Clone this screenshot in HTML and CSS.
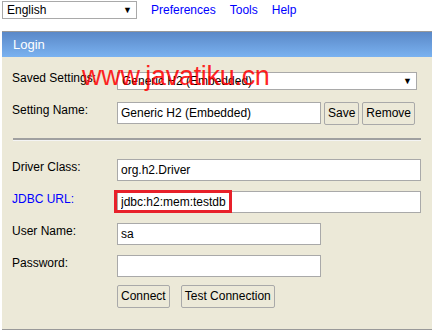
FILE: index.html
```html
<!DOCTYPE html>
<html>
<head>
    <meta charset="UTF-8">
    <title>H2 Console</title>
    <link rel="stylesheet" href="styles.css">
</head>
<body>
<div class="toolbar">
    <div class="lang-select">
        <span>English</span>
        <span class="arrow">&#9660;</span>
    </div>
    <a href="#" class="nav-link">Preferences</a>
    <a href="#" class="nav-link">Tools</a>
    <a href="#" class="nav-link">Help</a>
</div>

<div class="login">
    <div class="login-header">Login</div>
    <div class="login-body">
        <div class="row">
            <label class="label">Saved Settings:</label>
            <div class="select wide">
                <span>Generic H2 (Embedded)</span>
                <span class="arrow">&#9660;</span>
            </div>
        </div>
        <div class="row">
            <label class="label">Setting Name:</label>
            <input type="text" class="field short" value="Generic H2 (Embedded)">
            <button class="btn">Save</button>
            <button class="btn">Remove</button>
        </div>

        <hr class="sep">

        <div class="row">
            <label class="label">Driver Class:</label>
            <input type="text" class="field long" value="org.h2.Driver">
        </div>
        <div class="row">
            <label class="label link-label">JDBC URL:</label>
            <div class="mark-wrap">
                <input type="text" class="field long" value="jdbc:h2:mem:testdb">
                <div class="mark"></div>
            </div>
        </div>
        <div class="row">
            <label class="label">User Name:</label>
            <input type="text" class="field short" value="sa">
        </div>
        <div class="row">
            <label class="label">Password:</label>
            <input type="password" class="field short" value="">
        </div>
        <div class="row actions">
            <button class="btn">Connect</button>
            <button class="btn">Test Connection</button>
        </div>
    </div>
    <div class="watermark">www.javatiku.cn</div>
</div>
</body>
</html>
```

FILE: styles.css
```css
body {
    margin: 1px 2px;
    font-family: "Liberation Sans", Arial, sans-serif;
    font-size: 12px;
    color: #000000;
    background-color: #FFFFFF;
}

.toolbar {
    display: flex;
    align-items: center;
    height: 18px;
}

.lang-select {
    display: flex;
    justify-content: space-between;
    align-items: center;
    box-sizing: border-box;
    width: 135px;
    height: 18px;
    padding: 0 4px 0 4px;
    border: 1px solid #A9A9A9;
    font-size: 12px;
}

.arrow {
    font-size: 9px;
}

.nav-link {
    margin-left: 14px;
    font-size: 12px;
    color: #0000FF;
    text-decoration: none;
}

.login {
    position: relative;
    width: 430px;
    margin: 12px 0 0 -1px;
    border: 1px solid #999999;
    background-color: #ECE9D8;
}

.login-header {
    height: 25px;
    line-height: 25px;
    padding-left: 11px;
    font-size: 13px;
    color: #FFFFFF;
    background: linear-gradient(#5A88C8, #7AB2F0);
}

.login-body {
    padding: 13px 11px 22px 10px;
}

.row {
    display: flex;
    align-items: center;
    height: 22px;
    margin-bottom: 10px;
}

.label {
    width: 105px;
    align-self: flex-start;
    padding-top: 1px;
}

.link-label {
    color: #0000FF;
}

.select {
    display: flex;
    justify-content: space-between;
    align-items: center;
    box-sizing: border-box;
    height: 18px;
    padding: 0 4px 0 4px;
    border: 1px solid #A9A9A9;
    background-color: #FFFFFF;
    font-size: 12px;
}

.wide {
    width: 300px;
}

.field {
    box-sizing: border-box;
    height: 22px;
    margin: 0;
    padding: 1px 3px;
    border: 1px solid #A9A9A9;
    font-family: "Liberation Sans", Arial, sans-serif;
    font-size: 12px;
    background-color: #FFFFFF;
}

.short {
    width: 204px;
}

.long {
    width: 304px;
}

.btn {
    box-sizing: border-box;
    height: 23px;
    margin: 0 0 0 3px;
    padding: 0 3px;
    border: 1px solid #A9A9A9;
    border-radius: 2px;
    font-family: "Liberation Sans", Arial, sans-serif;
    font-size: 12px;
    color: #000000;
    background-color: #ECE9D8;
}

.sep {
    margin: 14px 0 18px 1px;
    width: 408px;
    border: none;
    border-top: 2px solid #A0A0A0;
    border-bottom: 1px solid #F4F4F4;
}

.actions {
    padding-left: 105px;
    margin-top: -2px;
    margin-bottom: 0;
}

.actions .btn {
    margin-left: 0;
    margin-right: 11px;
}

.mark-wrap {
    position: relative;
}

.mark {
    position: absolute;
    left: -3px;
    top: -1px;
    width: 118px;
    height: 23px;
    box-sizing: border-box;
    border: 3px solid #E8202A;
}

.watermark {
    position: absolute;
    left: 80px;
    top: 29px;
    font-family: "Liberation Sans", Arial, sans-serif;
    font-size: 27px;
    letter-spacing: -0.3px;
    color: #FF0000;
    opacity: 0.85;
    pointer-events: none;
}
```
